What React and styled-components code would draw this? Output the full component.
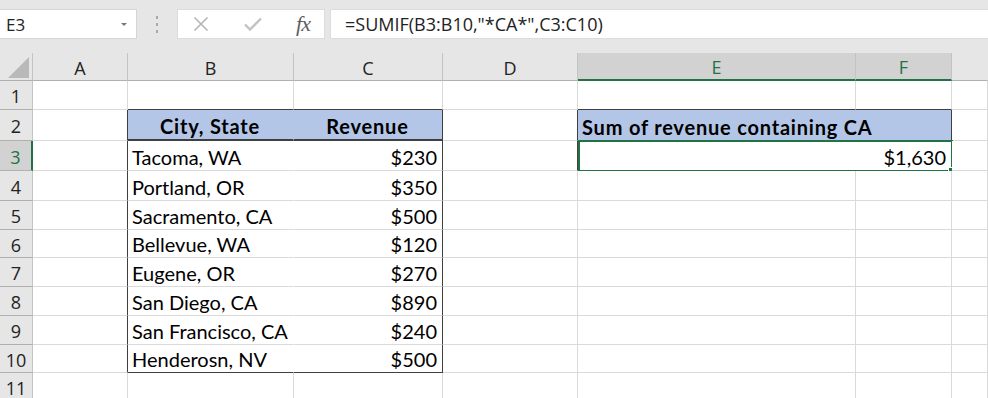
import React from 'react';
import styled, { createGlobalStyle } from 'styled-components';

const GREEN = '#217346';
const GRID = '#dadada';
const EDGE = '#3f3f3f';
const BLUE = '#b4c6e7';

const GlobalStyle = createGlobalStyle`
  html, body {
    margin: 0;
    padding: 0;
    background: #e6e6e6;
  }
  body {
    font-family: Lato, "Liberation Sans", sans-serif;
    overflow: hidden;
  }
`;

const Window = styled.div`
  width: 988px;
  height: 398px;
  overflow: hidden;
  background: #e6e6e6;
  display: flex;
  flex-direction: column;
`;

const FormulaBar = styled.div`
  display: flex;
  align-items: center;
  height: 30px;
  padding: 9px 0 14px;
`;

const NameBox = styled.div`
  box-sizing: border-box;
  width: 137px;
  height: 30px;
  background: #fff;
  border: 1px solid #d6d6d6;
  border-left: none;
  display: flex;
  align-items: center;
  justify-content: space-between;
  padding: 0 9px 0 6px;
  font-family: "Open Sans", sans-serif;
  font-size: 17px;
  color: #222;
`;

const Caret = styled.span`
  width: 0;
  height: 0;
  border-left: 3px solid transparent;
  border-right: 3px solid transparent;
  border-top: 3px solid #777;
`;

const Grip = styled.div`
  width: 40px;
  display: flex;
  flex-direction: column;
  align-items: center;
  gap: 4px;

  span {
    width: 2px;
    height: 3px;
    background: #a8a8a8;
  }
`;

const FxBox = styled.div`
  box-sizing: border-box;
  width: 148px;
  height: 30px;
  background: #fff;
  border: 1px solid #dcdcdc;
  display: flex;
  align-items: center;
  padding: 0 14px 0 15px;
  justify-content: space-between;
`;

const Fx = styled.span`
  font-family: "Liberation Serif", serif;
  font-style: italic;
  font-size: 22px;
  color: #5e5e5e;
  letter-spacing: -1px;
`;

const FormulaInput = styled.div`
  box-sizing: border-box;
  flex: 1;
  height: 30px;
  margin-left: 5px;
  background: #fff;
  border: 1px solid #dcdcdc;
  border-right: none;
  display: flex;
  align-items: center;
  padding-left: 14px;
  font-family: "Open Sans", sans-serif;
  font-size: 18px;
  color: #222;
`;

const Sheet = styled.div`
  display: grid;
  grid-template-columns: 33px 95px 166px 149px 135px 278px 96px 1fr;
  grid-template-rows: 28px 29px 31px 30px 30px 29px 28px 29px 29px 29px 28px 29px;
`;

const Head = styled.div`
  box-sizing: border-box;
  display: flex;
  align-items: center;
  justify-content: center;
  padding-top: 2px;
  background: ${p => (p.$active ? '#d2d2d2' : '#e6e6e6')};
  color: ${p => (p.$active ? GREEN : '#222')};
  border-right: ${p => (p.$activeSide ? `2px solid ${GREEN}` : `1px solid ${p.$noRight ? 'transparent' : '#c4c4c4'}`)};
  border-bottom: ${p => (p.$activeBottom ? `2px solid ${GREEN}` : '1px solid #b0b0b0')};
  font-family: "Open Sans", sans-serif;
  font-size: 18px;
`;

const Corner = styled(Head)`
  align-items: flex-end;
  justify-content: flex-end;
  padding: 0 3px 2px 0;
`;

const Cell = styled.div`
  position: relative;
  box-sizing: border-box;
  grid-column: span ${p => p.$span || 1};
  display: flex;
  align-items: flex-end;
  justify-content: ${p => (p.$align === 'right' ? 'flex-end' : p.$align === 'center' ? 'center' : 'flex-start')};
  padding: 0 5px 3px 4px;
  background: ${p => p.$fill || '#fff'};
  border-right: 1px solid ${p => p.$right || GRID};
  border-bottom: ${p => p.$bw || 1}px solid ${p => p.$bottom || GRID};
  font-weight: ${p => (p.$bold ? 700 : 400)};
  letter-spacing: ${p => (p.$bold ? '0.8px' : '0')};
  font-size: 20px;
  line-height: 1;
  color: #000;
  white-space: nowrap;
`;

const Selection = styled.div`
  position: absolute;
  top: -1px;
  left: 0;
  right: -2px;
  bottom: -2px;
  border: 2px solid ${GREEN};
  pointer-events: none;
`;

const FillHandle = styled.div`
  position: absolute;
  right: -4px;
  bottom: -4px;
  width: 5px;
  height: 5px;
  background: ${GREEN};
  border: 1px solid #fff;
`;

const data = [
  ['Tacoma, WA', '$230'],
  ['Portland, OR', '$350'],
  ['Sacramento, CA', '$500'],
  ['Bellevue, WA', '$120'],
  ['Eugene, OR', '$270'],
  ['San Diego, CA', '$890'],
  ['San Francisco, CA', '$240'],
  ['Henderosn, NV', '$500'],
];

const cols = ['A', 'B', 'C', 'D', 'E', 'F'];

function rowCells(r) {
  const inTable = r >= 2 && r <= 10;
  const cells = [];
  cells.push(<Cell key="A" $right={inTable ? EDGE : GRID} />);

  if (r === 2) {
    cells.push(<Cell key="B" $fill={BLUE} $right={BLUE} $bottom={EDGE} $bw={2} $bold $align="center">City, State</Cell>);
    cells.push(<Cell key="C" $fill={BLUE} $right={EDGE} $bottom={EDGE} $bw={2} $bold $align="center">Revenue</Cell>);
  } else if (r >= 3 && r <= 10) {
    const [city, rev] = data[r - 3];
    const bottom = r === 10 ? EDGE : GRID;
    cells.push(<Cell key="B" $right="#fff" $bottom={bottom}>{city}</Cell>);
    cells.push(<Cell key="C" $right={EDGE} $bottom={bottom} $align="right">{rev}</Cell>);
  } else {
    cells.push(<Cell key="B" $bottom={r === 1 ? EDGE : GRID} />);
    cells.push(<Cell key="C" $bottom={r === 1 ? EDGE : GRID} />);
  }

  cells.push(<Cell key="D" $right={r === 2 || r === 3 ? EDGE : GRID} />);

  if (r === 2) {
    cells.push(<Cell key="E" $span={2} $fill={BLUE} $right={EDGE} $bottom={EDGE} $bold>Sum of revenue containing CA</Cell>);
  } else if (r === 3) {
    cells.push(
      <Cell key="E" $span={2} $align="right">
        $1,630
        <Selection />
        <FillHandle />
      </Cell>
    );
  } else {
    cells.push(<Cell key="E" $bottom={r === 1 ? EDGE : GRID} />);
    cells.push(<Cell key="F" $bottom={r === 1 ? EDGE : GRID} />);
  }

  cells.push(<Cell key="G" />);
  return cells;
}

export default function App() {
  return (
    <>
      <GlobalStyle />
      <Window>
        <FormulaBar>
          <NameBox>
            E3
            <Caret />
          </NameBox>
          <Grip>
            <span />
            <span />
            <span />
          </Grip>
          <FxBox>
            <svg width="16" height="16" viewBox="0 0 16 16">
              <path d="M1.5 1.5 L14.5 14.5 M14.5 1.5 L1.5 14.5" stroke="#b5b5b5" strokeWidth="1.6" fill="none" />
            </svg>
            <svg width="18" height="14" viewBox="0 0 18 14">
              <path d="M1 7.5 L6 12.5 L17 1.5" stroke="#c2c2c2" strokeWidth="2.4" fill="none" />
            </svg>
            <Fx>fx</Fx>
          </FxBox>
          <FormulaInput>=SUMIF(B3:B10,"*CA*",C3:C10)</FormulaInput>
        </FormulaBar>

        <Sheet>
          <Corner>
            <svg width="21" height="21" viewBox="0 0 21 21">
              <path d="M21 0 L21 21 L0 21 Z" fill="#b9b9b9" />
            </svg>
          </Corner>
          {cols.map(c => (
            <Head key={c} $active={c === 'E' || c === 'F'} $activeBottom={c === 'E' || c === 'F'}>
              {c}
            </Head>
          ))}
          <Head $noRight />

          {Array.from({ length: 11 }, (_, i) => i + 1).map(r => (
            <React.Fragment key={r}>
              <Head $active={r === 3} $activeSide={r === 3}>{r}</Head>
              {rowCells(r)}
            </React.Fragment>
          ))}
        </Sheet>
      </Window>
    </>
  );
}
